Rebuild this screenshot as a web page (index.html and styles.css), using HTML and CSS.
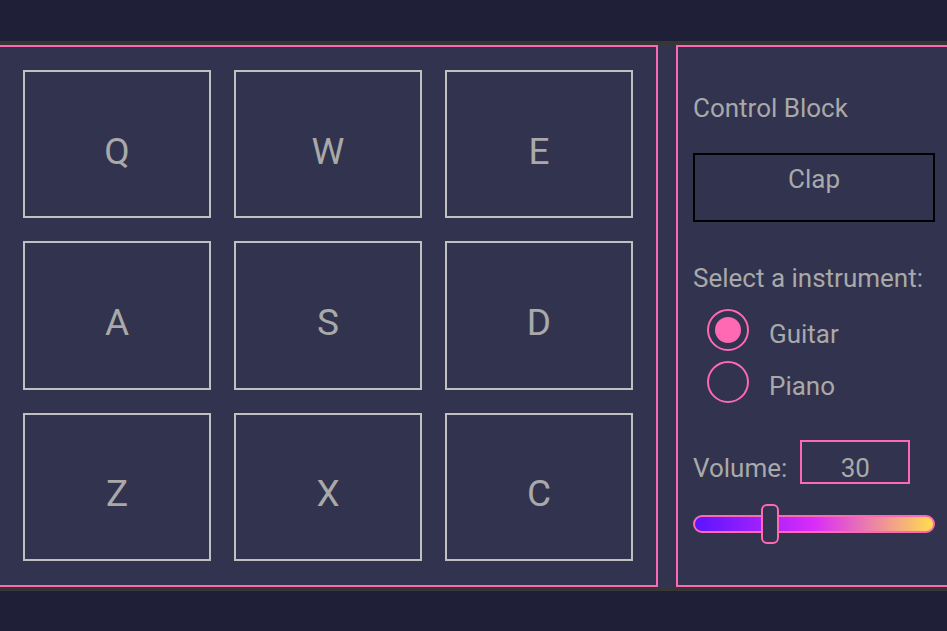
FILE: index.html
```html
<!DOCTYPE html>
<html lang="en">
<head>
<meta charset="utf-8">
<title>Drum Machine</title>
<link rel="stylesheet" href="styles.css">
</head>
<body>
<main class="machine">
  <section class="pad-bank">
    <div class="pad">Q</div>
    <div class="pad">W</div>
    <div class="pad">E</div>
    <div class="pad">A</div>
    <div class="pad">S</div>
    <div class="pad">D</div>
    <div class="pad">Z</div>
    <div class="pad">X</div>
    <div class="pad">C</div>
  </section>
  <section class="controls">
    <div class="title">Control Block</div>
    <div class="display">Clap</div>
    <div class="label">Select a instrument:</div>
    <div class="radios">
      <div class="radio-row"><span class="radio checked"></span><span class="radio-text">Guitar</span></div>
      <div class="radio-row"><span class="radio"></span><span class="radio-text">Piano</span></div>
    </div>
    <div class="volume-row"><span class="volume-label">Volume:</span><span class="volume-box">30</span></div>
    <div class="track"><span class="thumb"></span></div>
  </section>
</main>
</body>
</html>
```

FILE: styles.css
```css
html, body {
  margin: 0;
  padding: 0;
}
body {
  background: #1f1f38;
  overflow: hidden;
  font-family: Roboto, "Liberation Sans", sans-serif;
  color: #a9a9a9;
  width: 947px;
  height: 631px;
}
.machine {
  margin-top: 41px;
  margin-left: -2px;
  height: 550px;
  box-sizing: border-box;
  border-top: 4px solid #363636;
  border-bottom: 4px solid #363636;
  background: #31334f;
  display: flex;
  gap: 18px;
}
.pad-bank {
  flex: 0 0 auto;
  width: 660px;
  height: 100%;
  box-sizing: border-box;
  border: 2px solid #ff69b4;
  padding: 23px 23px 24px 23px;
  display: grid;
  grid-template-columns: repeat(3, 188px);
  grid-template-rows: repeat(3, 1fr);
  gap: 23px;
}
.pad {
  border: 2px solid #c0c0c0;
  display: flex;
  align-items: center;
  justify-content: center;
  font-size: 37px;
  padding-top: 14px;
  box-sizing: border-box;
}
.controls {
  flex: 0 0 auto;
  width: 276px;
  height: 100%;
  box-sizing: border-box;
  border: 2px solid #ff69b4;
  padding: 46px 15px 0 15px;
  font-size: 26px;
  line-height: 30px;
  display: flex;
  flex-direction: column;
}
.title {
  height: 30px;
}
.display {
  margin-top: 30px;
  height: 69px;
  box-sizing: border-box;
  border: 2px solid #000;
  padding-top: 9px;
  text-align: center;
}
.label {
  margin-top: 41px;
  height: 30px;
}
.radios {
  margin-top: 16px;
  margin-left: 14px;
  display: flex;
  flex-direction: column;
  gap: 10px;
}
.radio-row {
  display: flex;
  align-items: center;
  gap: 20px;
  height: 42px;
}
.radio {
  width: 42px;
  height: 42px;
  box-sizing: border-box;
  border: 2px solid #ff69b4;
  border-radius: 50%;
  display: flex;
  align-items: center;
  justify-content: center;
}
.radio.checked::after {
  content: "";
  width: 26px;
  height: 26px;
  border-radius: 50%;
  background: #ff69b4;
}
.radio-text {
  padding-top: 8px;
}
.volume-row {
  margin-top: 37px;
  display: flex;
  align-items: baseline;
  gap: 13px;
}
.volume-box {
  width: 110px;
  height: 44px;
  box-sizing: border-box;
  border: 2px solid #ff69b4;
  padding-top: 11px;
  text-align: center;
}
.track {
  position: relative;
  margin-top: 31px;
  height: 18px;
  box-sizing: border-box;
  border: 2px solid #ff69b4;
  border-radius: 9px;
  background: linear-gradient(to right, #5a14ff 0%, #d92cf9 50%, #ffdd4f 100%);
}
.thumb {
  position: absolute;
  left: 66px;
  top: -13px;
  width: 18px;
  height: 40px;
  box-sizing: border-box;
  border: 2px solid #ff69b4;
  border-radius: 6px;
  background: #31334f;
}
```
